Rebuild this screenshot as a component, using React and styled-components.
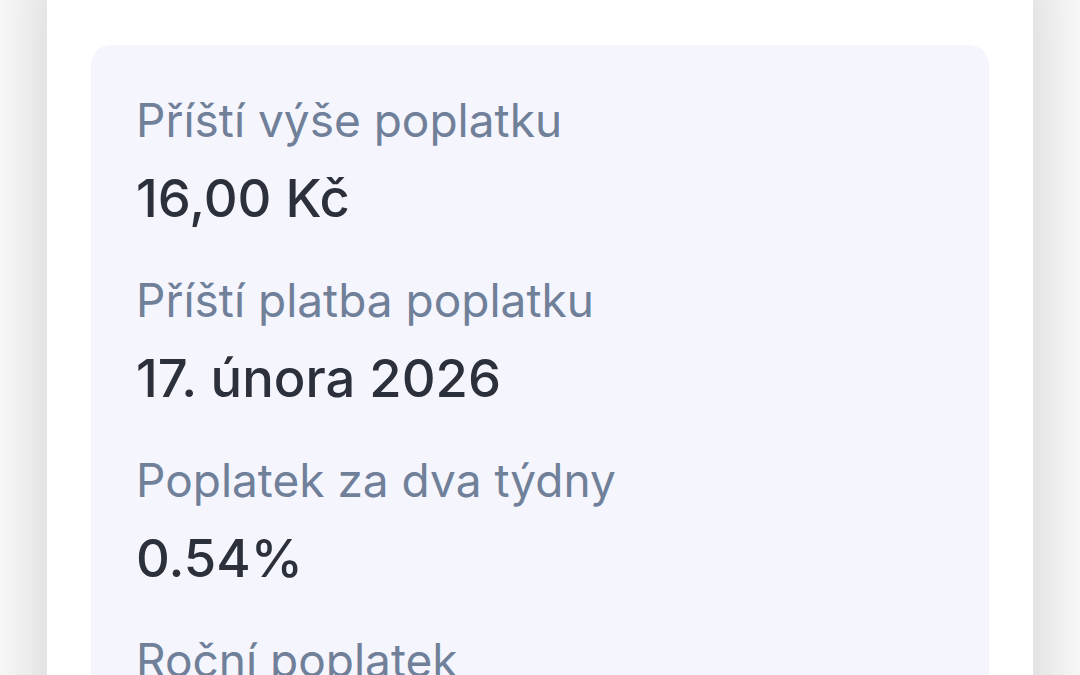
import React from 'react';
import styled, { createGlobalStyle } from 'styled-components';

const GlobalStyle = createGlobalStyle`
  html, body {
    margin: 0;
    padding: 0;
    background: #f3f3f3;
    font-family: Inter, "Noto Sans", sans-serif;
    overflow: hidden;
  }
`;

const Page = styled.div`
  height: 675px;
  overflow: hidden;
  padding: 0 46px;
  background: linear-gradient(90deg, #f6f6f6 0%, #e9e9e9 4.3%, #e9e9e9 95.7%, #f6f6f6 100%);
`;

const Card = styled.div`
  min-height: 100%;
  background: #ffffff;
  border-left: 1px solid #e2e5ec;
  border-right: 1px solid #e2e5ec;
  padding: 45px 44px 0;
  box-shadow: 0 0 40px rgba(0, 0, 0, 0.05);
`;

const Panel = styled.div`
  background: #f5f5fe;
  border-radius: 20px;
  padding: 40px 45px 40px;
`;

const Item = styled.div`
  display: flex;
  flex-direction: column;
  margin-bottom: 24px;
`;

const Label = styled.div`
  color: #708099;
  font-size: 46px;
  line-height: 70px;
  font-weight: 400;
`;

const Value = styled.div`
  color: #2b303a;
  font-size: 52.5px;
  line-height: 86px;
  font-weight: 500;
`;

const rows = [
  { label: 'Příští výše poplatku', value: '16,00 Kč' },
  { label: 'Příští platba poplatku', value: '17. února 2026' },
  { label: 'Poplatek za dva týdny', value: '0.54%' },
  { label: 'Roční poplatek', value: '14.04%' },
];

export default function App() {
  return (
    <>
      <GlobalStyle />
      <Page>
        <Card>
          <Panel>
            {rows.map((r) => (
              <Item key={r.label}>
                <Label>{r.label}</Label>
                <Value>{r.value}</Value>
              </Item>
            ))}
          </Panel>
        </Card>
      </Page>
    </>
  );
}
